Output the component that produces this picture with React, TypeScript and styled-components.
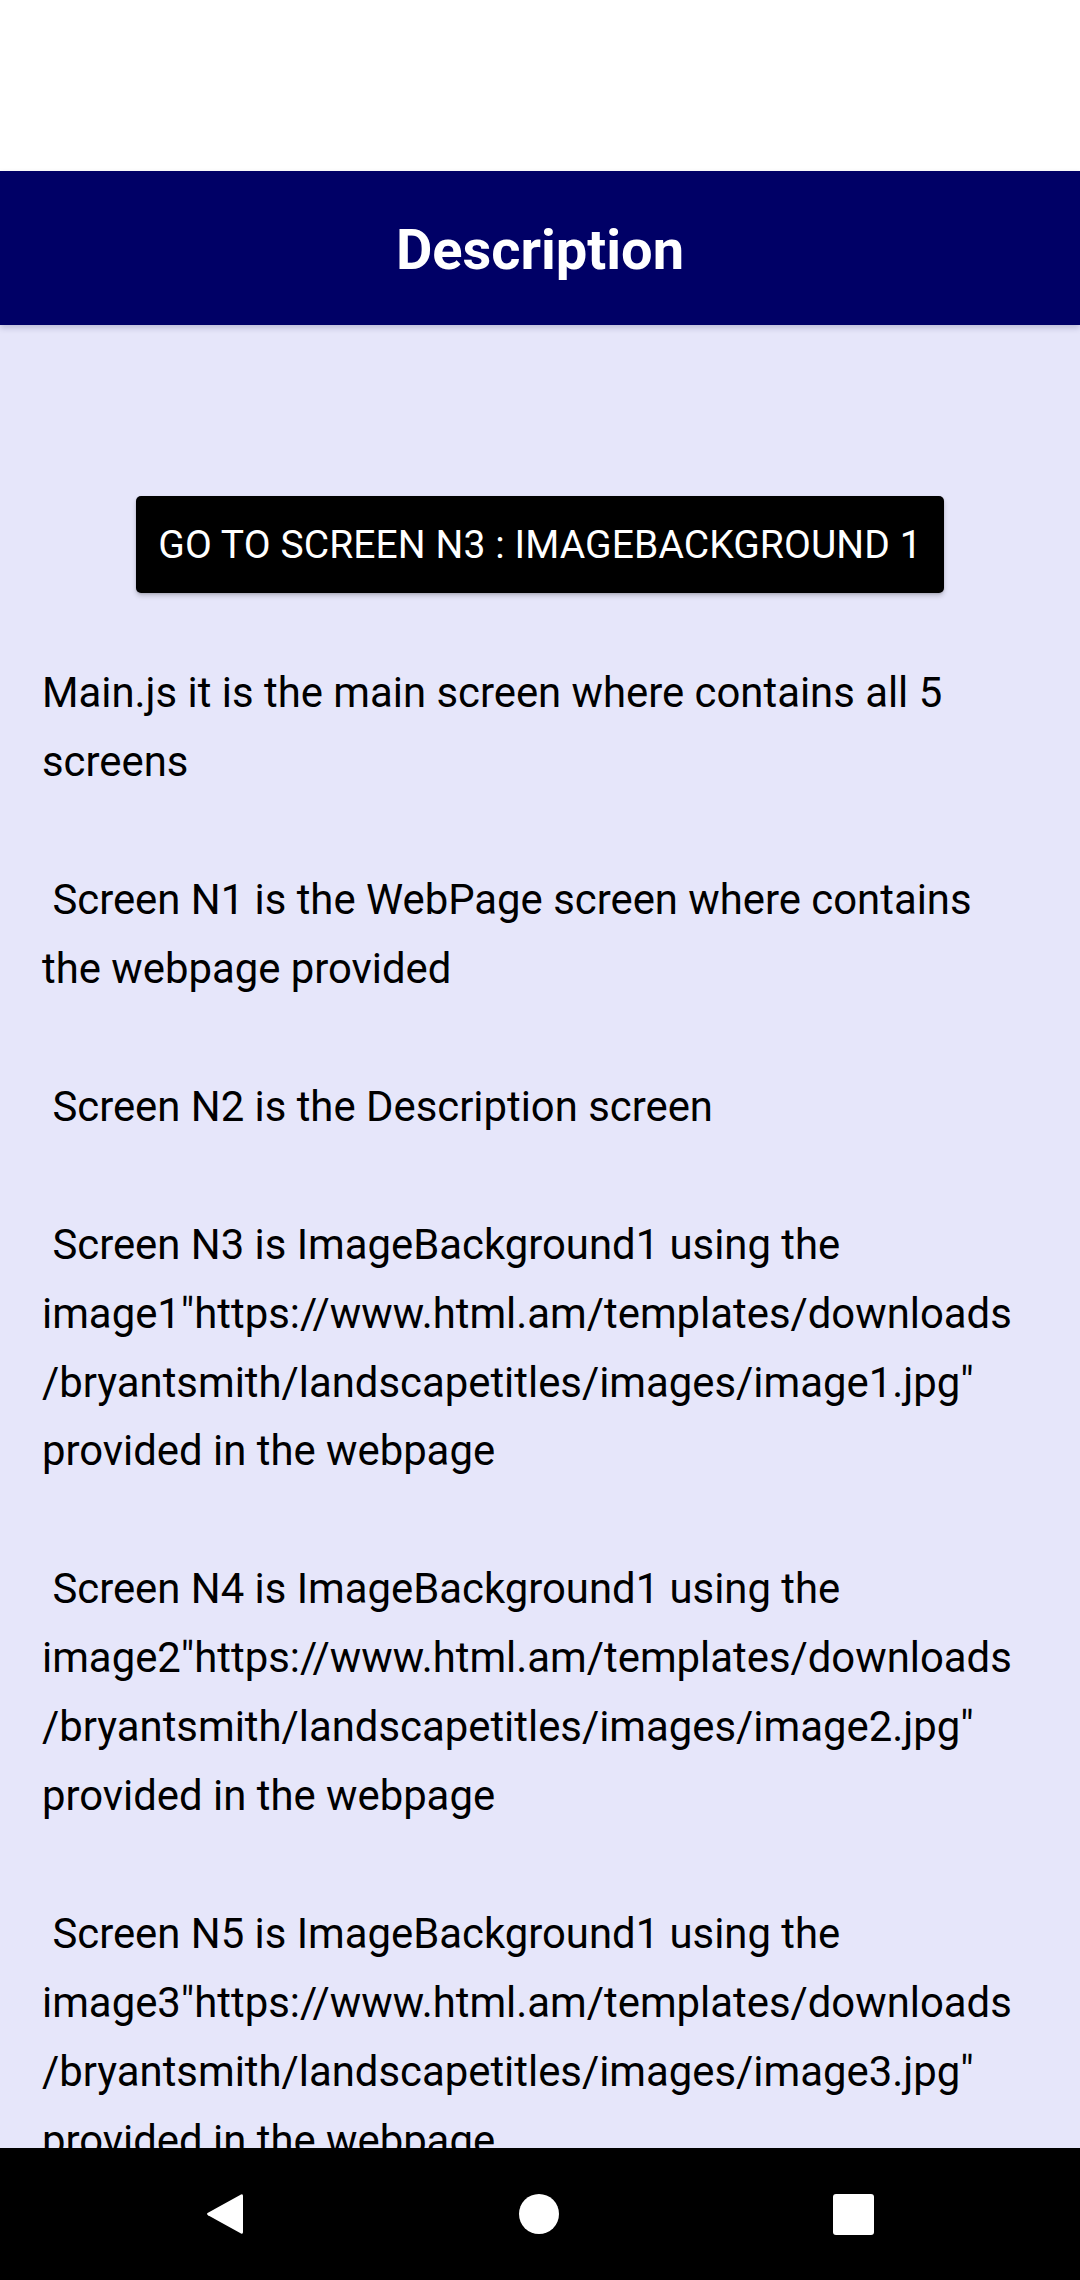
import React from "react";
import styled, { createGlobalStyle } from "styled-components";

const GlobalStyle = createGlobalStyle`
  html, body {
    margin: 0;
    padding: 0;
    background: #ffffff;
  }
  body {
    font-family: Roboto, "Noto Sans", "Liberation Sans", sans-serif;
  }
  * { box-sizing: border-box; }
`;

const Screen = styled.div`
  width: 1080px;
  height: 2280px;
  display: flex;
  flex-direction: column;
  overflow: hidden;
  background: #ffffff;
`;

const StatusArea = styled.div`
  height: 171px;
  flex-shrink: 0;
  background: #ffffff;
`;

const Header = styled.header`
  height: 154px;
  flex-shrink: 0;
  background: #000066;
  display: flex;
  align-items: center;
  justify-content: center;
  position: relative;
  z-index: 1;
  box-shadow: 0 3px 6px rgba(0, 0, 60, 0.18);
`;

const Title = styled.h1`
  margin: 0;
  color: #ffffff;
  font-family: Roboto, "Noto Sans", sans-serif;
  font-weight: 700;
  font-size: 56px;
  line-height: 1;
  padding-top: 4px;
`;

const Content = styled.main`
  flex: 1;
  min-height: 0;
  overflow: hidden;
  background: #e6e6fa;
  display: flex;
  flex-direction: column;
  align-items: stretch;
  padding: 171px 42px 0;
`;

const ButtonRow = styled.div`
  display: flex;
  justify-content: center;
`;

const ActionButton = styled.button`
  height: 97px;
  padding: 0 22px;
  border: none;
  border-radius: 5px;
  background: #000000;
  color: #ffffff;
  font-family: Roboto, "Noto Sans", sans-serif;
  font-size: 39px;
  font-weight: 400;
  text-transform: uppercase;
  letter-spacing: 0.1px;
  box-shadow: 0 3px 5px rgba(0, 0, 0, 0.18), 0 1px 2px rgba(0, 0, 0, 0.12);
  cursor: pointer;
`;

const Body = styled.p`
  margin: 66px 0 0;
  color: #000000;
  font-family: Roboto, "Noto Sans", sans-serif;
  font-size: 41.85px;
  line-height: 68.95px;
  white-space: pre;
`;

const NavBar = styled.nav`
  height: 132px;
  flex-shrink: 0;
  background: #000000;
  display: flex;
  align-items: center;
  justify-content: space-between;
  padding: 0 189px 0 187px;
`;

const NavButton = styled.div`
  width: 76px;
  height: 76px;
  display: flex;
  align-items: center;
  justify-content: center;
`;

const description = [
  "Main.js it is the main screen where contains all 5",
  "screens",
  "",
  " Screen N1 is the WebPage screen where contains",
  "the webpage provided",
  "",
  " Screen N2 is the Description screen",
  "",
  " Screen N3 is ImageBackground1 using the",
  "image1\"https://www.html.am/templates/downloads",
  "/bryantsmith/landscapetitles/images/image1.jpg\"",
  "provided in the webpage",
  "",
  " Screen N4 is ImageBackground1 using the",
  "image2\"https://www.html.am/templates/downloads",
  "/bryantsmith/landscapetitles/images/image2.jpg\"",
  "provided in the webpage",
  "",
  " Screen N5 is ImageBackground1 using the",
  "image3\"https://www.html.am/templates/downloads",
  "/bryantsmith/landscapetitles/images/image3.jpg\"",
  "provided in the webpage",
].join("\n");

export default function App() {
  return (
    <>
      <GlobalStyle />
      <Screen>
        <StatusArea />
        <Header>
          <Title>Description</Title>
        </Header>
        <Content>
          <ButtonRow>
            <ActionButton>Go to Screen N3 : ImageBackground 1</ActionButton>
          </ButtonRow>
          <Body>{description}</Body>
        </Content>
        <NavBar>
          <NavButton>
            <svg width="40" height="44" viewBox="0 0 40 44">
              <path
                d="M36 2.5 Q38 1.5 38 4 L38 40 Q38 42.5 36 41.5 L3 23.2 Q1 22 3 20.8 Z"
                fill="#ffffff"
              />
            </svg>
          </NavButton>
          <NavButton>
            <svg width="40" height="40" viewBox="0 0 40 40">
              <circle cx="20" cy="20" r="20" fill="#ffffff" />
            </svg>
          </NavButton>
          <NavButton>
            <svg width="41" height="41" viewBox="0 0 41 41">
              <rect x="0" y="0" width="41" height="41" rx="3" fill="#ffffff" />
            </svg>
          </NavButton>
        </NavBar>
      </Screen>
    </>
  );
}
